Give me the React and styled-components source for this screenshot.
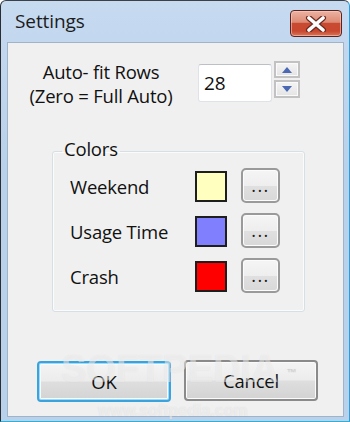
import React from "react";
import styled, { createGlobalStyle } from "styled-components";

const GlobalStyle = createGlobalStyle`
  html, body { margin: 0; padding: 0; background: #ffffff; }
  body {
    width: 350px;
    height: 422px;
    overflow: hidden;
    font-family: "Open Sans", "Noto Sans", "Liberation Sans", sans-serif;
    color: #111;
  }
  * { box-sizing: border-box; }
`;

const Window = styled.div`
  position: relative;
  width: 350px;
  height: 422px;
  display: flex;
  flex-direction: column;
  background: linear-gradient(180deg, #c6daf0 0%, #b9d1ea 40%, #b9d1ea 100%);
  border: 1px solid;
  border-color: #3c4048 #2c9ddc #27b4da #2a2d33;
  border-radius: 6px 6px 0 0;
  overflow: hidden;
`;

const TitleBar = styled.div`
  height: 41px;
  flex: none;
  display: flex;
  align-items: flex-start;
  justify-content: space-between;
  padding: 0 7px 0 14px;
`;

const Title = styled.div`
  font-size: 19px;
  line-height: 24px;
  padding-top: 8px;
  color: #1c1c1c;
  letter-spacing: -0.1px;
`;

const CloseButton = styled.button`
  margin-top: 9px;
  width: 52px;
  height: 27px;
  padding: 0;
  border: 1px solid #5a2320;
  border-radius: 4px;
  background: linear-gradient(
    180deg,
    #ecb3a3 0%,
    #dd8a73 45%,
    #c94a32 50%,
    #c8482f 80%,
    #d8765a 100%
  );
  box-shadow: inset 0 0 0 1px rgba(255, 210, 200, 0.55);
  display: flex;
  align-items: center;
  justify-content: center;
`;

const Client = styled.div`
  flex: 1;
  margin: 0 5px 4px 6px;
  background: #f0f0f0;
  border: 1px solid #9fb3c9;
  display: flex;
  flex-direction: column;
`;

const TopRow = styled.div`
  display: flex;
  align-items: flex-start;
  padding: 17px 0 0 3px;
`;

const RowsLabel = styled.div`
  width: 180px;
  text-align: center;
  font-size: 18.5px;
  line-height: 24px;
  color: #111;
  letter-spacing: -0.2px;
`;

const NumberBox = styled.div`
  margin: 4px 0 0 7px;
  width: 74px;
  height: 38px;
  background: #fff;
  border: 1px solid #dfe3e8;
  border-top-color: #bcc0c5;
  border-radius: 3px;
  font-size: 19px;
  line-height: 36px;
  padding-left: 5px;
  color: #111;
`;

const Spin = styled.div`
  margin: 1px 0 0 2px;
  display: flex;
  flex-direction: column;
  gap: 2px;
`;

const SpinButton = styled.div`
  width: 26px;
  height: ${(p) => p.$h}px;
  border: 2px solid #c2c2c2;
  background: linear-gradient(180deg, #f4f4f4, #e4e4e4);
  box-shadow: inset 0 0 0 1px #fafafa;
  display: flex;
  align-items: center;
  justify-content: center;
`;

const Group = styled.fieldset`
  margin: 29px 0 0 44px;
  width: 253px;
  padding: 3px 0 18px 9px;
  border: 1px solid #d5dfe5;
  border-radius: 3px;
  box-shadow: inset 0 0 0 1px #fbfbfb;
  display: flex;
  flex-direction: column;
  gap: 10px;
`;

const Legend = styled.legend`
  padding: 0 2px 4px 2px;
  font-size: 18.5px;
  line-height: 24px;
  color: #111;
  letter-spacing: -0.2px;
`;

const ColorRow = styled.div`
  display: flex;
  align-items: center;
  height: 35px;
  padding-left: 8px;
`;

const ColorLabel = styled.div`
  width: 125px;
  font-size: 18.5px;
  line-height: 24px;
  padding-top: 2px;
  color: #111;
  letter-spacing: -0.2px;
`;

const Swatch = styled.div`
  width: 32px;
  height: 31px;
  margin-top: 1px;
  border: 2px solid #1e1e1e;
  background: ${(p) => p.$color};
`;

const DotsButton = styled.button`
  margin-left: 14px;
  width: 39px;
  height: 35px;
  padding: 0 0 7px 0;
  border: 2px solid #9a9a9a;
  border-radius: 5px;
  background: linear-gradient(180deg, #f5f5f5 0%, #eeeeee 50%, #e0e0e0 51%, #d8d8d8 100%);
  box-shadow: inset 0 0 0 1px #fcfcfc;
  display: flex;
  align-items: flex-end;
  justify-content: center;
  font-family: inherit;
  font-size: 18px;
  line-height: 18px;
  font-weight: normal;
  color: #222;
  letter-spacing: 1.5px;
`;

const ButtonRow = styled.div`
  display: flex;
  gap: 13px;
  margin-top: 48px;
  padding-left: 29px;
`;

const DialogButton = styled.button`
  width: 134px;
  height: 41px;
  padding: 0;
  border-radius: 4px;
  border: ${(p) => (p.$default ? "2px solid #3aa2dd" : "2px solid #8a8a8a")};
  background: linear-gradient(180deg, #f4f4f4 0%, #ececec 48%, #dedede 52%, #d3d3d3 100%);
  box-shadow: ${(p) =>
    p.$default ? "inset 0 0 0 1px #9fdaf6, inset 0 0 0 2px #f6fbfe" : "inset 0 0 0 1px #fbfbfb"};
  font-family: inherit;
  font-size: 18.5px;
  color: #111;
  letter-spacing: -0.2px;
  margin-top: ${(p) => (p.$default ? "1px" : "0")};
`;

const Watermark = styled.div`
  position: absolute;
  left: 60px;
  top: 346px;
  font-family: "Liberation Sans", "Arial", sans-serif;
  font-weight: bold;
  font-size: 38px;
  line-height: 44px;
  color: rgba(255, 255, 255, 0.45);
  text-shadow: 0 0 1px rgba(140, 140, 140, 0.18);
  pointer-events: none;
  white-space: nowrap;
`;

const TradeMark = styled.span`
  font-size: 10px;
  vertical-align: top;
  position: relative;
  top: 4px;
  margin-left: 8px;
  color: rgba(200, 200, 200, 0.6);
`;

const WatermarkUrl = styled.div`
  position: absolute;
  left: 97px;
  top: 401px;
  font-family: "Liberation Sans", "Arial", sans-serif;
  font-weight: bold;
  font-size: 16px;
  line-height: 18px;
  color: rgba(255, 255, 255, 0.5);
  text-shadow: 0 0 1px rgba(140, 140, 140, 0.25);
  pointer-events: none;
  white-space: nowrap;
`;

const CloseGlyph = () => (
  <svg width="22" height="16" viewBox="0 0 22 16">
    <path
      d="M4 2 L18 14 M18 2 L4 14"
      stroke="#6b2a22"
      strokeWidth="6"
      strokeLinecap="round"
      fill="none"
    />
    <path
      d="M4 2 L18 14 M18 2 L4 14"
      stroke="#ffffff"
      strokeWidth="3.6"
      strokeLinecap="round"
      fill="none"
    />
  </svg>
);

const Arrow = ({ up }) => (
  <svg width="10" height="6" viewBox="0 0 10 6">
    <path d={up ? "M0 6 L5 0 L10 6 Z" : "M0 0 L5 6 L10 0 Z"} fill="#4a68b4" />
  </svg>
);

const colors = [
  { label: "Weekend", color: "#ffffc0" },
  { label: "Usage Time", color: "#8080ff" },
  { label: "Crash", color: "#ff0000" },
];

export default function App() {
  return (
    <>
      <GlobalStyle />
      <Window>
        <TitleBar>
          <Title>Settings</Title>
          <CloseButton aria-label="Close">
            <CloseGlyph />
          </CloseButton>
        </TitleBar>
        <Client>
          <TopRow>
            <RowsLabel>
              Auto- fit Rows
              <br />
              (Zero = Full Auto)
            </RowsLabel>
            <NumberBox>28</NumberBox>
            <Spin>
              <SpinButton $h={17}>
                <Arrow up />
              </SpinButton>
              <SpinButton $h={18}>
                <Arrow />
              </SpinButton>
            </Spin>
          </TopRow>
          <Group>
            <Legend>Colors</Legend>
            {colors.map((c) => (
              <ColorRow key={c.label}>
                <ColorLabel>{c.label}</ColorLabel>
                <Swatch $color={c.color} />
                <DotsButton>...</DotsButton>
              </ColorRow>
            ))}
          </Group>
          <ButtonRow>
            <DialogButton $default>OK</DialogButton>
            <DialogButton>Cancel</DialogButton>
          </ButtonRow>
        </Client>
        <Watermark>
          SOFTPEDIA<TradeMark>™</TradeMark>
        </Watermark>
        <WatermarkUrl>www.softpedia.com</WatermarkUrl>
      </Window>
    </>
  );
}
